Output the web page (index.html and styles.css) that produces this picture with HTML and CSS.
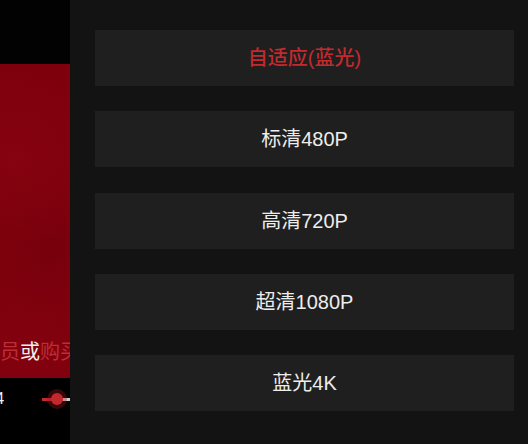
FILE: index.html
```html
<!DOCTYPE html>
<html lang="zh-CN">
<head>
<meta charset="utf-8">
<title>清晰度选择</title>
<link rel="stylesheet" href="styles.css">
</head>
<body>
<div class="screen">
  <div class="player">
    <div class="player-top"></div>
    <div class="video">
      <p class="notice">开通会<span class="hl">员</span>或<span class="hl">购买</span>本片</p>
    </div>
    <div class="controls">
      <span class="time">00:04</span>
      <div class="track">
        <span class="knob"></span>
      </div>
    </div>
  </div>
  <div class="panel">
    <div class="option active">自适应(蓝光)</div>
    <div class="option">标清480P</div>
    <div class="option">高清720P</div>
    <div class="option">超清1080P</div>
    <div class="option">蓝光4K</div>
  </div>
</div>
</body>
</html>
```

FILE: styles.css
```css
* { box-sizing: border-box; }
html, body {
  margin: 0;
  padding: 0;
  background: #000;
}
body {
  width: 528px;
  height: 444px;
  overflow: hidden;
  font-family: "Liberation Sans", "Noto Sans CJK SC", sans-serif;
}
.screen {
  display: flex;
  width: 528px;
  height: 444px;
}
.player {
  width: 70px;
  flex: none;
  display: flex;
  flex-direction: column;
  overflow: hidden;
  background: #000;
}
.player-top {
  height: 64px;
  flex: none;
  background: #020202;
}
.video {
  height: 314px;
  flex: none;
  display: flex;
  flex-direction: column;
  justify-content: flex-end;
  padding-bottom: 17px;
  background:
    radial-gradient(circle at 20% 30%, rgba(150, 10, 25, 0.3), transparent 40%),
    radial-gradient(circle at 70% 60%, rgba(100, 0, 10, 0.3), transparent 45%),
    radial-gradient(circle at 40% 85%, rgba(140, 5, 20, 0.25), transparent 40%),
    #7f000d;
  overflow: hidden;
}
.notice {
  margin: 0 0 0 -60px;
  white-space: nowrap;
  font-family: "Noto Sans CJK SC", sans-serif;
  font-size: 20px;
  line-height: 20px;
  color: #f2f2f2;
}
.notice .hl { color: #bd2e35; }
.controls {
  flex: 1;
  display: grid;
  grid-template-columns: 42px 1fr;
  align-items: center;
  align-content: start;
  padding-top: 11px;
}
.time {
  justify-self: start;
  margin-left: -36px;
  font-family: "Liberation Sans", sans-serif;
  font-size: 16px;
  line-height: 20px;
  color: #f2f2f2;
  white-space: nowrap;
}
.track {
  position: relative;
  height: 3px;
  margin-top: 1px;
  background: linear-gradient(to right, #c5282d 15px, #cfcfcf 15px);
}
.knob {
  position: absolute;
  left: 9px;
  top: -5px;
  width: 12px;
  height: 12px;
  border-radius: 50%;
  background: #c3282d;
  box-shadow: 0 0 0 4px rgba(160, 20, 28, 0.35);
}
.panel {
  flex: 1;
  background: #131313;
  padding: 30px 14px 0 25px;
  display: flex;
  flex-direction: column;
  gap: 25.25px;
}
.option {
  height: 56px;
  flex: none;
  background: #1f1f1f;
  display: flex;
  align-items: center;
  justify-content: center;
  font-size: 20px;
  line-height: 20px;
  color: #ededed;
}
.option.active {
  color: #c22a2e;
  font-weight: 500;
}
```
